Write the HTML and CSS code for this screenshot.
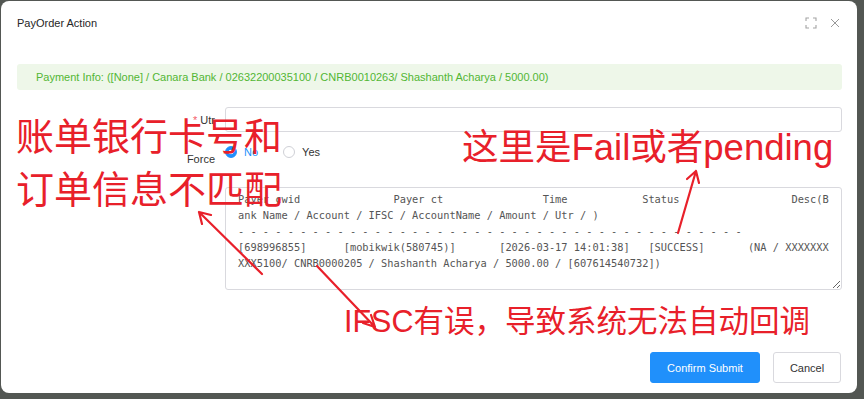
FILE: index.html
```html
<!doctype html>
<html>
<head>
  <meta charset="utf-8" />
  <title>PayOrder Action</title>
  <link rel="stylesheet" href="styles.css">
</head>

<body>
  <div class="modal">
    <div class="modal-head">
      <span class="modal-title">PayOrder Action</span>
      <div class="modal-tools">
        <svg class="icon" width="12" height="12" viewBox="0 0 12 12">
          <path d="M1 4V1h3M8 1h3v3M11 8v3H8M4 11H1V8" fill="none" stroke="#a3a3a3" stroke-width="1.1" />
        </svg>
        <svg class="icon" width="10" height="10" viewBox="0 0 10 10">
          <path d="M1 1l8 8M9 1l-8 8" fill="none" stroke="#999" stroke-width="1" />
        </svg>
      </div>
    </div>

    <div class="alert">Payment Info: ([None] / Canara Bank / 02632200035100 / CNRB0010263/ Shashanth Acharya / 5000.00)</div>

    <form class="form">
      <div class="row row-utr">
        <label class="label"><span class="req">*</span>Utr</label>
        <input class="input" type="text">
      </div>
      <div class="row row-force">
        <label class="label label-force">Force</label>
        <div class="radios">
          <label class="radio checked"><span class="dot"></span>No</label>
          <label class="radio"><span class="dot"></span>Yes</label>
        </div>
      </div>
      <div class="row row-log">
        <span></span>
        <textarea class="log" readonly wrap="off">
Payer cwid               Payer ct                Time            Status                  Desc(B
ank Name / Account / IFSC / AccountName / Amount / Utr / )
- - - - - - - - - - - - - - - - - - - - - - - - - - - - - - - - - - - - - - - - -
[698996855]      [mobikwik(580745)]       [2026-03-17 14:01:38]   [SUCCESS]       (NA / XXXXXXX
XXX5100/ CNRB0000205 / Shashanth Acharya / 5000.00 / [607614540732])</textarea>
      </div>
    </form>

    <div class="modal-foot">
      <button class="btn btn-primary" type="button">Confirm Submit</button>
      <button class="btn btn-cancel" type="button">Cancel</button>
    </div>
  </div>

  <div class="notes">
    <div class="note note-mismatch">账单银行卡号和<br>订单信息不匹配</div>
    <div class="note note-status">这里是Fail或者pending</div>
    <div class="note note-ifsc">IFSC有误，导致系统无法自动回调</div>
    <svg class="arrows" width="864" height="399" viewBox="0 0 864 399">
      <g fill="none" stroke="#e8202a" stroke-width="2.2" stroke-linecap="round" stroke-linejoin="round">
        <path d="M262 274L199 212M202 224L199 212L211 215" />
        <path d="M317 266L375 327M371 315L375 327L363 323" />
        <path d="M678 233L696 171M687 179L696 171L699 183" />
      </g>
    </svg>
  </div>
</body>
</html>
```

FILE: styles.css
```css
body {
  margin: 0;
  height: 399px;
  overflow: hidden;
  background: #535753;
  font-family: "Liberation Sans", Arial, sans-serif;
}
.modal {
  box-sizing: border-box;
  width: 856px;
  height: 392px;
  margin: 1px 0 0 1px;
  padding: 0 15px 0 16px;
  background: #fff;
  border-radius: 8px;
}
.modal-head {
  display: flex;
  align-items: center;
  justify-content: space-between;
  height: 44px;
  padding-right: 2px;
}
.modal-title {
  font-size: 11px;
  color: #262626;
}
.modal-tools {
  display: flex;
  align-items: center;
  gap: 13px;
}
.icon {
  display: block;
}
.alert {
  margin-top: 19px;
  height: 26px;
  line-height: 26px;
  padding: 0 19px;
  background: #eef7e9;
  color: #52b634;
  font-size: 11px;
  border-radius: 3px;
}
.form {
  margin: 17px 0 0 0;
}
.row {
  display: grid;
  grid-template-columns: 198px 1fr;
  column-gap: 10px;
}
.row-utr {
  align-items: center;
}
.label {
  text-align: right;
  font-size: 11px;
  color: #333;
}
.req {
  color: #f5606a;
  margin-right: 3px;
}
.input {
  box-sizing: border-box;
  height: 25px;
  margin: 0;
  border: 1px solid #d9d9de;
  border-radius: 3px;
}
.row-force {
  margin-top: 10px;
  align-items: start;
}
.label-force {
  margin-top: 7px;
  line-height: 20px;
}
.radios {
  display: flex;
  gap: 25px;
  line-height: 20px;
  font-size: 11px;
  color: #333;
}
.radio {
  display: flex;
  align-items: center;
  gap: 7px;
}
.dot {
  box-sizing: border-box;
  width: 12px;
  height: 12px;
  border: 1px solid #cfd0d6;
  border-radius: 50%;
  background: #fff;
}
.checked {
  color: #2090fb;
}
.checked .dot {
  border-color: #2090fb;
  background: radial-gradient(circle, #fff 0 2px, #2090fb 2.6px);
}
.row-log {
  margin-top: 18px;
}
.log {
  box-sizing: border-box;
  height: 103px;
  margin: 0;
  padding: 3px 12px;
  border: 1px solid #d9d9de;
  border-radius: 3px;
  font-family: "DejaVu Sans Mono", monospace;
  font-size: 10.33px;
  line-height: 16px;
  color: #555;
  white-space: pre;
  overflow: hidden;
}
.modal-foot {
  display: flex;
  justify-content: flex-end;
  gap: 13px;
  margin-top: 62px;
  padding-right: 1px;
}
.btn {
  height: 31px;
  padding: 0;
  font-family: inherit;
  font-size: 11px;
  color: #333;
  background: #fff;
  border: 1px solid #d9d9de;
  border-radius: 3px;
}
.btn-primary {
  width: 110px;
  color: #fff;
  background: #2090fb;
  border-color: #2090fb;
}
.btn-cancel {
  width: 68px;
}
.notes {
  position: absolute;
  top: 0;
  left: 0;
  width: 864px;
  height: 399px;
  pointer-events: none;
  color: #e8202a;
  font-family: "Liberation Sans", "Noto Sans CJK SC", sans-serif;
}
.note {
  position: absolute;
  white-space: nowrap;
  line-height: 1;
}
.note-mismatch {
  left: 16px;
  top: 111px;
  font-size: 38px;
  line-height: 53px;
}
.note-status {
  left: 462px;
  top: 130px;
  font-size: 36.5px;
}
.note-ifsc {
  left: 344px;
  top: 306px;
  font-size: 30.5px;
}
.arrows {
  position: absolute;
  top: 0;
  left: 0;
}
```
